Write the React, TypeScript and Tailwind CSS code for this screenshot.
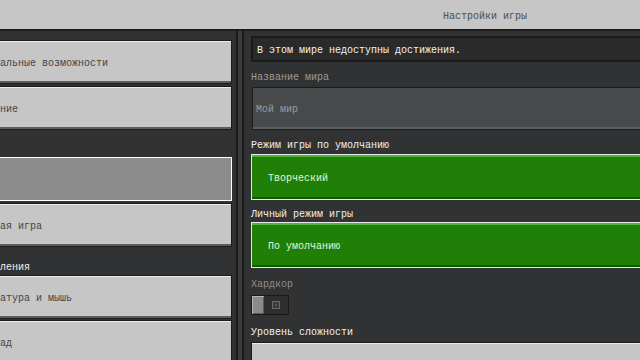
import React from "react";

function NavButton({ label, selected }: { label: string; selected?: boolean }) {
  if (selected) {
    return <div className="h-[44px] shrink-0 border border-white bg-[#8c8c8c]" />;
  }
  return (
    <div className="flex h-[44px] shrink-0 items-center border border-[#1b1b1c] bg-[#c6c6c6] pl-[9px] pt-[4px] text-[#454545] shadow-[inset_0_1px_0_#ececec,inset_0_-2px_0_#5c5c5c]">
      {label}
    </div>
  );
}

function GreenButton({ label }: { label: string }) {
  return (
    <div className="flex h-[46px] items-center border border-[#e8e8e8] bg-[#1f7f07] pl-[16px] pt-[4px] text-[#e3f6dc] shadow-[inset_0_2px_0_#4fb63c,inset_0_-2px_0_#115804]">
      {label}
    </div>
  );
}

export default function App() {
  return (
    <div
      className="flex h-[360px] w-[640px] flex-col overflow-hidden bg-[#313233] text-[10px] leading-[12px]"
      style={{ fontFamily: '"Liberation Mono", "DejaVu Sans Mono", monospace' }}
    >
      {/* Header */}
      <div className="flex h-[31px] shrink-0 items-center border-b-2 border-[#1c1c1d] bg-[#c6c6c6] pl-[443px] pt-[4px] text-[#4e4e4e]">
        Настройки игры
      </div>

      <div className="flex min-h-0 flex-1">
        {/* Left navigation, cropped at the window's left edge */}
        <div className="-ml-[40px] flex w-[276px] shrink-0 flex-col pr-[4px] pt-[9px]">
          <NavButton label="Специальные возможности" />
          <div className="h-[2px] shrink-0" />
          <NavButton label="Создание" />
          <div className="flex h-[27px] shrink-0 items-end pl-[10px] pb-[1px] text-[#f0f0f0]">Мир</div>
          <NavButton label="Игра" selected />
          <div className="h-[2px] shrink-0" />
          <NavButton label="Сетевая игра" />
          <div className="flex h-[28px] shrink-0 items-end pl-[10px] pb-[1px] text-[#f0f0f0]">Управления</div>
          <NavButton label="Клавиатура и мышь" />
          <div className="h-[1px] shrink-0" />
          <NavButton label="Геймпад" />
        </div>

        {/* Divider */}
        <div className="w-[8px] shrink-0 border-x-2 border-[#19191a] bg-[#3b3b3c]" />

        {/* Right settings panel */}
        <div className="-mr-[24px] flex min-w-0 flex-1 flex-col pl-[7px] pt-[5px]">
          <div className="flex h-[26px] shrink-0 items-center border-2 border-[#1b1b1c] bg-[#2a2a2b] pl-[4px] pt-[3px] text-[#f2f2f2]">
            В этом мире недоступны достижения.
          </div>

          <div className="mt-[10px] text-[#9a9a9a]">Название мира</div>
          <div className="ml-[1px] mt-[3px] flex h-[43px] shrink-0 items-center border border-[#1b1b1c] bg-[#48494a] pl-[3px] pt-[3px] text-[#9c9c9c] shadow-[inset_0_-2px_0_#5e5f60]">
            Мой мир
          </div>

          <div className="mt-[10px] text-[#f0f0f0]">Режим игры по умолчанию</div>
          <div className="mt-[2px]">
            <GreenButton label="Творческий" />
          </div>

          <div className="mt-[9px] text-[#f0f0f0]">Личный режим игры</div>
          <div className="mt-[1px]">
            <GreenButton label="По умолчанию" />
          </div>

          <div className="mt-[11px] text-[#8e8e8e]">Хардкор</div>
          <div className="mt-[4px] flex h-[20px] w-[38px] shrink-0 border border-[#19191a]">
            <div className="w-[12px] border-l border-t border-[#b4b4b4] bg-[#8a8a8a] shadow-[inset_-1px_-1px_0_#5a5a5a]" />
            <div className="flex flex-1 items-center justify-center bg-[#2e2e2f]">
              <div className="flex h-[8px] w-[8px] items-center justify-center border border-[#6a6a6a] bg-[#3a3a3b]">
                <div className="h-[2px] w-[2px] bg-[#555]" />
              </div>
            </div>
          </div>

          <div className="mt-[12px] text-[#f0f0f0]">Уровень сложности</div>
          <div className="mt-[3px] h-[44px] shrink-0 border border-[#1b1b1c] bg-[#c6c6c6] shadow-[inset_0_1px_0_#ececec]" />
        </div>
      </div>
    </div>
  );
}
